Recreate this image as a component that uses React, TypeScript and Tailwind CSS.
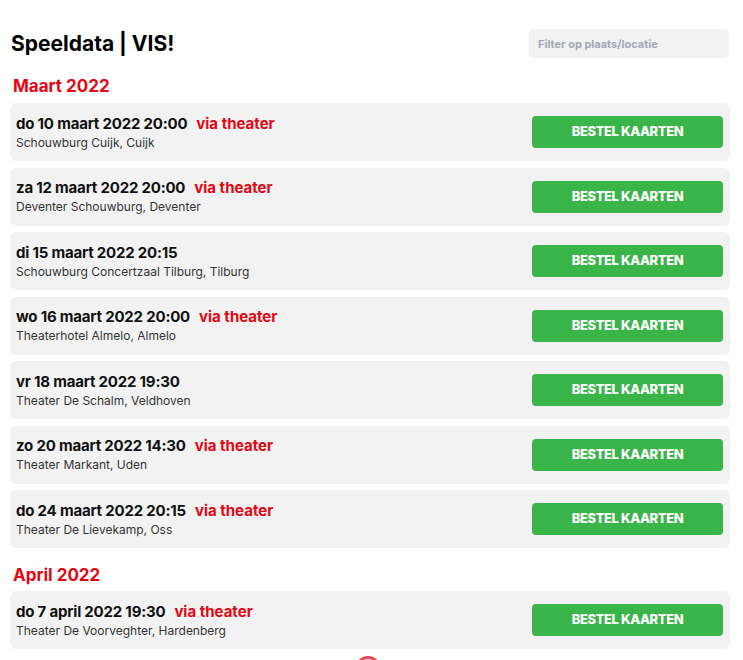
import React from 'react';

type Show = { date: string; place: string; viaTheater?: boolean };

const months: { name: string; shows: Show[] }[] = [
    {
        name: 'Maart 2022',
        shows: [
            { date: 'do 10 maart 2022 20:00', place: 'Schouwburg Cuijk, Cuijk', viaTheater: true },
            { date: 'za 12 maart 2022 20:00', place: 'Deventer Schouwburg, Deventer', viaTheater: true },
            { date: 'di 15 maart 2022 20:15', place: 'Schouwburg Concertzaal Tilburg, Tilburg' },
            { date: 'wo 16 maart 2022 20:00', place: 'Theaterhotel Almelo, Almelo', viaTheater: true },
            { date: 'vr 18 maart 2022 19:30', place: 'Theater De Schalm, Veldhoven' },
            { date: 'zo 20 maart 2022 14:30', place: 'Theater Markant, Uden', viaTheater: true },
            { date: 'do 24 maart 2022 20:15', place: 'Theater De Lievekamp, Oss', viaTheater: true },
        ],
    },
    {
        name: 'April 2022',
        shows: [
            { date: 'do 7 april 2022 19:30', place: 'Theater De Voorveghter, Hardenberg', viaTheater: true },
        ],
    },
];

function ShowRow({ show }: { show: Show }) {
    return (
        <div className="flex items-center justify-between h-[58px] mb-[6.5px] pl-[6px] pr-[7px] bg-[#f2f2f2] rounded-[6px]">
            <div className="flex flex-col">
                <div className="flex items-baseline">
                    <span className="text-[15px] font-bold text-[#111] leading-[20px] tracking-[-0.2px]">{show.date}</span>
                    {show.viaTheater && (
                        <span className="ml-[9px] text-[15px] font-bold text-[#e30613] leading-[20px]">via theater</span>
                    )}
                </div>
                <span className="text-[12px] text-[#333] leading-[17px]">{show.place}</span>
            </div>
            <button className="w-[191px] h-[32px] bg-[#39b54a] rounded-[4px] text-white text-[13px] font-extrabold uppercase tracking-[-0.4px]">
                Bestel kaarten
            </button>
        </div>
    );
}

export default function App() {
    return (
        <div className="w-[743px] h-[660px] overflow-hidden bg-white font-['Inter','Noto_Sans',sans-serif]">
            <div className="pl-[10px] pr-[13px] pt-[29px]">
                {/* Header */}
                <div className="flex items-center justify-between">
                    <h1 className="text-[21px] font-bold text-black leading-[29px] pl-[1px]">Speeldata | VIS!</h1>
                    <input
                        placeholder="Filter op plaats/locatie"
                        className="w-[200px] h-[29px] mr-[1px] bg-[#f2f2f2] rounded-[5px] px-[9px] text-[11px] font-bold placeholder:text-[#a3a8b3] outline-none"
                    />
                </div>

                {months.map((month, i) => (
                    <div key={month.name}>
                        <h2
                            className={
                                i === 0
                                    ? 'text-[17px] font-bold text-[#e30613] leading-[20px] pl-[3px] mt-[18px] mb-[7px]'
                                    : 'text-[17px] font-bold text-[#e30613] leading-[20px] pl-[3px] mt-[17px] mb-[6px]'
                            }
                        >
                            {month.name}
                        </h2>
                        {month.shows.map((show) => (
                            <ShowRow key={show.date} show={show} />
                        ))}
                    </div>
                ))}

                <div className="flex justify-center pr-[4px]">
                    <div className="w-[26px] h-[26px] rounded-full border-[3px] border-[#e8434f]" />
                </div>
            </div>
        </div>
    );
}
